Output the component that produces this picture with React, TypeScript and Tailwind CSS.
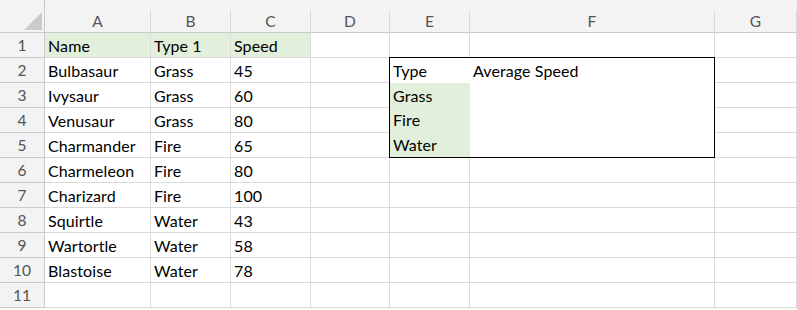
const cols = ['A', 'B', 'C', 'D', 'E', 'F', 'G'];

const data: string[][] = [
  ['Name', 'Type 1', 'Speed'],
  ['Bulbasaur', 'Grass', '45'],
  ['Ivysaur', 'Grass', '60'],
  ['Venusaur', 'Grass', '80'],
  ['Charmander', 'Fire', '65'],
  ['Charmeleon', 'Fire', '80'],
  ['Charizard', 'Fire', '100'],
  ['Squirtle', 'Water', '43'],
  ['Wartortle', 'Water', '58'],
  ['Blastoise', 'Water', '78'],
  ['', '', ''],
];

const font = { fontFamily: 'Lato, "Open Sans", sans-serif' };

function Cell({ text = '', green = false }: { text?: string; green?: boolean }) {
  return (
    <div
      className={`flex items-center pl-[3px] pt-px border-r border-b border-[#dadada] text-[16px] tracking-[0.1px] text-black whitespace-nowrap overflow-hidden ${
        green ? 'bg-[#e2efda]' : 'bg-white'
      }`}
    >
      {text}
    </div>
  );
}

export default function App() {
  return (
    <div className="w-[797px] h-[310px] overflow-hidden bg-white" style={font}>
      <div className="grid grid-cols-[45px_106px_80px_80px_79px_80px_245px_1fr] grid-rows-[33px_repeat(11,25px)]">
        {/* corner */}
        <div className="relative bg-[#f3f3f3] border-b border-r border-[#c9c9c9]">
          <svg className="absolute left-[24px] top-[12px]" width="18" height="18" viewBox="0 0 18 18">
            <polygon points="0,18 18,18 18,0" fill="#cbcbcb" />
          </svg>
        </div>
        {cols.map((c) => (
          <div key={c} className="flex flex-col bg-[#f3f3f3] border-b border-[#c9c9c9]">
            <div className="mt-[10px] flex-1 flex items-center justify-center border-r border-[#dadada] text-[15.5px] text-[#555]">
              {c}
            </div>
          </div>
        ))}

        {data.map((row, r) => {
          const rowNum = r + 1;
          return [
            <div
              key={`h${rowNum}`}
              className="flex items-center justify-center pt-px bg-[#f3f3f3] border-r border-b border-[#c9c9c9] text-[15.5px] text-[#555]"
            >
              {rowNum}
            </div>,
            <Cell key={`a${rowNum}`} text={row[0]} green={rowNum === 1} />,
            <Cell key={`b${rowNum}`} text={row[1]} green={rowNum === 1} />,
            <Cell key={`c${rowNum}`} text={row[2]} green={rowNum === 1} />,
            <Cell key={`d${rowNum}`} />,
            ...(rowNum >= 2 && rowNum <= 5
              ? []
              : [<Cell key={`e${rowNum}`} />, <Cell key={`f${rowNum}`} />]),
            <Cell key={`g${rowNum}`} />,
          ];
        })}

        {/* lookup box E2:F5 */}
        <div className="col-start-6 col-end-8 row-start-3 row-end-7 -mt-px -ml-px grid grid-cols-[80px_1fr] grid-rows-4 border border-black bg-white text-[16px] tracking-[0.1px] text-black">
          <div className="flex items-center pl-[3px] pt-px">Type</div>
          <div className="flex items-center pl-[3px] pt-px">Average Speed</div>
          <div className="flex items-center pl-[3px] pt-px bg-[#e2efda]">Grass</div>
          <div />
          <div className="flex items-center pl-[3px] pt-px bg-[#e2efda]">Fire</div>
          <div />
          <div className="flex items-center pl-[3px] pt-px bg-[#e2efda]">Water</div>
          <div />
        </div>
      </div>
    </div>
  );
}
